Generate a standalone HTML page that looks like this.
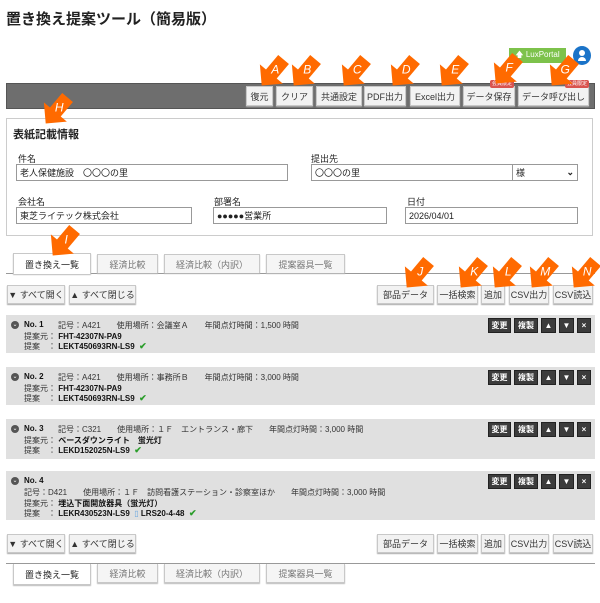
<!DOCTYPE html>
<html><head><meta charset="utf-8"><style>
*{box-sizing:border-box;margin:0;padding:0}
body{width:600px;height:603px;background:#fff;position:relative;overflow:hidden;font-family:"Liberation Sans","Noto Sans CJK JP",sans-serif;color:#222;font-size:9px}
.a{position:absolute}
.btn{position:absolute;background:#f2f2f2;border:1px solid #c8c8c8;box-shadow:0 1px 1px #aaa;display:flex;align-items:center;justify-content:center;font-size:9px;color:#333;white-space:nowrap}
.inp{position:absolute;border:1px solid #999;background:#fff;font-size:9px;padding-left:3px;display:flex;align-items:center;height:17px}
.lbl{position:absolute;font-size:9px;color:#222}
.tab{position:absolute;border:1px solid #c8c8c8;border-bottom:none;background:#f5f5f5;display:flex;align-items:center;justify-content:center;font-size:9px;color:#777;box-shadow:0 1px 1px #bbb}
.tab.on{background:#fff;color:#222;height:21px}
.item{position:absolute;left:6px;width:589px;background:#e0e0e0}
.ib{position:absolute;background:#3c3c3c;color:#fff;font-size:8px;display:flex;align-items:center;justify-content:center;height:15px;border:1px solid #222;font-weight:bold}
.t{position:absolute;font-size:8px;white-space:nowrap;color:#333}
.b{font-weight:bold;color:#111}
.circ{position:absolute;width:8px;height:8px;border-radius:50%;background:#555;color:#fff;font-size:6px;line-height:8px;text-align:center}
.chk{color:#2a9d2a;font-weight:bold;font-size:9px}
.badge{position:absolute;background:#d9534f;color:#fff;font-size:5px;border-radius:2px;padding:0 2px;height:8px;line-height:8px}
</style></head><body>
<div class="a" style="left:6px;top:8px;font-size:15px;font-weight:bold;color:#222">置き換え提案ツール（簡易版）</div>

<div class="a" style="left:509px;top:48px;width:57px;height:15px;background:#7dc24b;color:#fff;font-size:8px;display:flex;align-items:center;justify-content:center">🡅 LuxPortal</div>
<div class="a" style="left:573px;top:46px;width:18px;height:19px;border-radius:50%;background:#1a73c8"></div>
<div class="a" style="left:579px;top:50px;width:6px;height:6px;border-radius:50%;background:#fff"></div>
<div class="a" style="left:578px;top:57px;width:8px;height:4px;border-radius:4px 4px 0 0;background:#fff"></div>

<div class="a" style="left:6px;top:83px;width:589px;height:26px;background:#6e6e6e;border:1px solid #555"></div>
<div class="btn" style="left:246px;top:86px;width:27px;height:20px">復元</div>
<div class="btn" style="left:276px;top:86px;width:37px;height:20px">クリア</div>
<div class="btn" style="left:316px;top:86px;width:46px;height:20px">共通設定</div>
<div class="btn" style="left:364px;top:86px;width:42px;height:20px">PDF出力</div>
<div class="btn" style="left:410px;top:86px;width:50px;height:20px">Excel出力</div>
<div class="btn" style="left:463px;top:86px;width:52px;height:20px">データ保存</div>
<div class="btn" style="left:518px;top:86px;width:71px;height:20px">データ呼び出し</div>
<div class="badge" style="left:490px;top:80px">会員限定</div>
<div class="badge" style="left:565px;top:80px">会員限定</div>

<div class="a" style="left:6px;top:118px;width:587px;height:118px;border:1px solid #ccc"></div>
<div class="a" style="left:13px;top:126px;font-size:11px;font-weight:bold">表紙記載情報</div>
<div class="lbl" style="left:18px;top:152px">件名</div>
<div class="inp" style="left:16px;top:164px;width:272px">老人保健施設　〇〇〇の里</div>
<div class="lbl" style="left:311px;top:152px">提出先</div>
<div class="inp" style="left:311px;top:164px;width:202px">〇〇〇の里</div>
<div class="inp" style="left:512px;top:164px;width:66px">様<span style="position:absolute;right:3px;font-weight:bold">⌄</span></div>
<div class="lbl" style="left:18px;top:195px">会社名</div>
<div class="inp" style="left:16px;top:207px;width:176px">東芝ライテック株式会社</div>
<div class="lbl" style="left:214px;top:195px">部署名</div>
<div class="inp" style="left:213px;top:207px;width:174px">●●●●●営業所</div>
<div class="lbl" style="left:407px;top:195px">日付</div>
<div class="inp" style="left:405px;top:207px;width:173px">2026/04/01</div>

<div class="a" style="left:6px;top:273px;width:589px;height:1px;background:#999"></div>
<div class="tab on" style="left:13px;top:253px;width:78px">置き換え一覧</div>
<div class="tab" style="left:97px;top:254px;width:61px;height:19px">経済比較</div>
<div class="tab" style="left:164px;top:254px;width:96px;height:19px">経済比較（内訳）</div>
<div class="tab" style="left:266px;top:254px;width:79px;height:19px">提案器具一覧</div>

<div class="btn" style="left:7px;top:285px;width:58px;height:19px">▼ すべて開く</div>
<div class="btn" style="left:69px;top:285px;width:67px;height:19px">▲ すべて閉じる</div>
<div class="btn" style="left:377px;top:285px;width:57px;height:19px">部品データ</div>
<div class="btn" style="left:437px;top:285px;width:41px;height:19px">一括検索</div>
<div class="btn" style="left:481px;top:285px;width:24px;height:19px">追加</div>
<div class="btn" style="left:509px;top:285px;width:40px;height:19px">CSV出力</div>
<div class="btn" style="left:553px;top:285px;width:40px;height:19px">CSV読込</div>

<div class="item" style="top:315px;height:38px"></div>
<div class="circ" style="left:11px;top:321px">⌄</div>
<div class="t b" style="left:24px;top:320px">No. 1</div>
<div class="t" style="left:58px;top:320px">記号：A421　　使用場所：会議室Ａ　　年間点灯時間：1,500 時間</div>
<div class="t" style="left:24px;top:331px">提案元：&nbsp;<span class="b">FHT-42307N-PA9</span></div>
<div class="t" style="left:24px;top:341px">提案　：&nbsp;<span class="b">LEKT450693RN-LS9</span>&nbsp;&nbsp;<span class="chk">✔</span></div>

<div class="item" style="top:367px;height:38px"></div>
<div class="circ" style="left:11px;top:373px">⌄</div>
<div class="t b" style="left:24px;top:372px">No. 2</div>
<div class="t" style="left:58px;top:372px">記号：A421　　使用場所：事務所Ｂ　　年間点灯時間：3,000 時間</div>
<div class="t" style="left:24px;top:383px">提案元：&nbsp;<span class="b">FHT-42307N-PA9</span></div>
<div class="t" style="left:24px;top:393px">提案　：&nbsp;<span class="b">LEKT450693RN-LS9</span>&nbsp;&nbsp;<span class="chk">✔</span></div>

<div class="item" style="top:419px;height:40px"></div>
<div class="circ" style="left:11px;top:425px">⌄</div>
<div class="t b" style="left:24px;top:424px">No. 3</div>
<div class="t" style="left:58px;top:424px">記号：C321　　使用場所：１Ｆ　エントランス・廊下　　年間点灯時間：3,000 時間</div>
<div class="t" style="left:24px;top:435px">提案元：&nbsp;<span class="b">ベースダウンライト　蛍光灯</span></div>
<div class="t" style="left:24px;top:445px">提案　：&nbsp;<span class="b">LEKD152025N-LS9</span>&nbsp;&nbsp;<span class="chk">✔</span></div>

<div class="item" style="top:471px;height:49px"></div>
<div class="circ" style="left:11px;top:477px">⌄</div>
<div class="t b" style="left:24px;top:476px">No. 4</div>
<div class="t" style="left:24px;top:487px">記号：D421　　使用場所：１Ｆ　訪問看護ステーション・診察室ほか　　年間点灯時間：3,000 時間</div>
<div class="t" style="left:24px;top:498px">提案元：&nbsp;<span class="b">埋込下面開放器具（蛍光灯）</span></div>
<div class="t" style="left:24px;top:508px">提案　：&nbsp;<span class="b">LEKR430523N-LS9</span>&nbsp;&nbsp;<span style="color:#6aa7e0">▯</span>&nbsp;<span class="b">LRS20-4-48</span>&nbsp;&nbsp;<span class="chk">✔</span></div>

<div class="btn" style="left:7px;top:534px;width:58px;height:19px">▼ すべて開く</div>
<div class="btn" style="left:69px;top:534px;width:67px;height:19px">▲ すべて閉じる</div>
<div class="btn" style="left:377px;top:534px;width:57px;height:19px">部品データ</div>
<div class="btn" style="left:437px;top:534px;width:41px;height:19px">一括検索</div>
<div class="btn" style="left:481px;top:534px;width:24px;height:19px">追加</div>
<div class="btn" style="left:509px;top:534px;width:40px;height:19px">CSV出力</div>
<div class="btn" style="left:553px;top:534px;width:40px;height:19px">CSV読込</div>

<div class="a" style="left:6px;top:563px;width:589px;height:1px;background:#999"></div>
<div class="tab on" style="left:13px;top:564px;width:78px;border-top:none;border-bottom:1px solid #c8c8c8">置き換え一覧</div>
<div class="tab" style="left:97px;top:564px;width:61px;height:19px;border-top:none;border-bottom:1px solid #c8c8c8">経済比較</div>
<div class="tab" style="left:164px;top:564px;width:96px;height:19px;border-top:none;border-bottom:1px solid #c8c8c8">経済比較（内訳）</div>
<div class="tab" style="left:266px;top:564px;width:79px;height:19px;border-top:none;border-bottom:1px solid #c8c8c8">提案器具一覧</div>

<div class="ib" style="left:488px;top:318px;width:23px">変更</div><div class="ib" style="left:514px;top:318px;width:24px">複製</div><div class="ib" style="left:541px;top:318px;width:15px">▲</div><div class="ib" style="left:559px;top:318px;width:15px">▼</div><div class="ib" style="left:577px;top:318px;width:14px">×</div>
<div class="ib" style="left:488px;top:370px;width:23px">変更</div><div class="ib" style="left:514px;top:370px;width:24px">複製</div><div class="ib" style="left:541px;top:370px;width:15px">▲</div><div class="ib" style="left:559px;top:370px;width:15px">▼</div><div class="ib" style="left:577px;top:370px;width:14px">×</div>
<div class="ib" style="left:488px;top:422px;width:23px">変更</div><div class="ib" style="left:514px;top:422px;width:24px">複製</div><div class="ib" style="left:541px;top:422px;width:15px">▲</div><div class="ib" style="left:559px;top:422px;width:15px">▼</div><div class="ib" style="left:577px;top:422px;width:14px">×</div>
<div class="ib" style="left:488px;top:474px;width:23px">変更</div><div class="ib" style="left:514px;top:474px;width:24px">複製</div><div class="ib" style="left:541px;top:474px;width:15px">▲</div><div class="ib" style="left:559px;top:474px;width:15px">▼</div><div class="ib" style="left:577px;top:474px;width:14px">×</div>

<svg class="a" style="left:0;top:0" width="600" height="603">
<defs><g id="ar"><polygon points="-7,-32 7,-32 7,-13 15,-13 0,2 -15,-13 -7,-13" fill="#ff6a00"/></g></defs>
<g font-family="Liberation Sans" font-style="italic" font-size="12" fill="#fff" text-anchor="middle">
<g transform="translate(263,84) rotate(40)"><use href="#ar"/><text x="0" y="-15" transform="rotate(-40 0 -19)">A</text></g>
<g transform="translate(295,84) rotate(40)"><use href="#ar"/><text x="0" y="-15" transform="rotate(-40 0 -19)">B</text></g>
<g transform="translate(345,84) rotate(40)"><use href="#ar"/><text x="0" y="-15" transform="rotate(-40 0 -19)">C</text></g>
<g transform="translate(394,84) rotate(40)"><use href="#ar"/><text x="0" y="-15" transform="rotate(-40 0 -19)">D</text></g>
<g transform="translate(443,84) rotate(40)"><use href="#ar"/><text x="0" y="-15" transform="rotate(-40 0 -19)">E</text></g>
<g transform="translate(497,82) rotate(40)"><use href="#ar"/><text x="0" y="-15" transform="rotate(-40 0 -19)">F</text></g>
<g transform="translate(553,84) rotate(40)"><use href="#ar"/><text x="0" y="-15" transform="rotate(-40 0 -19)">G</text></g>
<g transform="translate(47,122) rotate(40)"><use href="#ar"/><text x="0" y="-15" transform="rotate(-40 0 -19)">H</text></g>
<g transform="translate(54,254) rotate(40)"><use href="#ar"/><text x="0" y="-15" transform="rotate(-40 0 -19)">I</text></g>
<g transform="translate(408,286) rotate(40)"><use href="#ar"/><text x="0" y="-15" transform="rotate(-40 0 -19)">J</text></g>
<g transform="translate(462,286) rotate(40)"><use href="#ar"/><text x="0" y="-15" transform="rotate(-40 0 -19)">K</text></g>
<g transform="translate(496,286) rotate(40)"><use href="#ar"/><text x="0" y="-15" transform="rotate(-40 0 -19)">L</text></g>
<g transform="translate(533,286) rotate(40)"><use href="#ar"/><text x="0" y="-15" transform="rotate(-40 0 -19)">M</text></g>
<g transform="translate(575,286) rotate(40)"><use href="#ar"/><text x="0" y="-15" transform="rotate(-40 0 -19)">N</text></g>
</g>
</svg>
</body></html>
